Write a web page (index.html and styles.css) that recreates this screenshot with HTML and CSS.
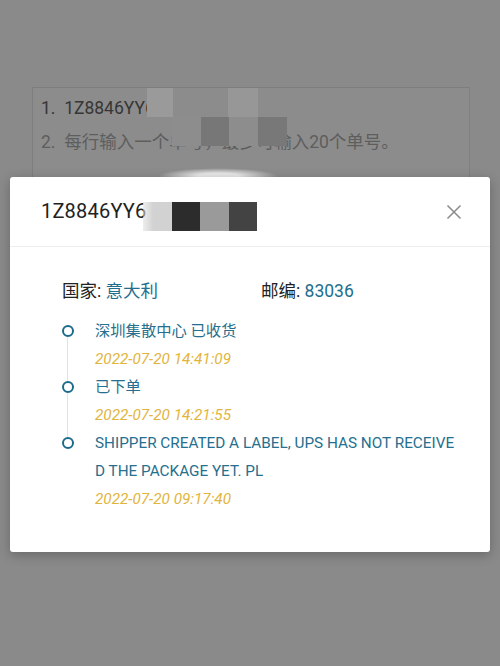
FILE: index.html
```html
<!DOCTYPE html>
<html lang="zh">
<head>
<meta charset="utf-8">
<link rel="stylesheet" href="styles.css">
</head>
<body>
<div class="page">
  <div class="input-box">
    <div class="line line-1">1.&nbsp; 1Z8846YY6</div>
    <div class="line line-2">2.&nbsp; 每行输入一个单号，最多可输入20个单号。</div>
    <span class="bm bm-a"></span>
    <span class="bm bm-b"></span>
    <span class="bm bm-c"></span>
    <span class="bm bm-d"></span>
    <span class="bm bm-e"></span>
    <span class="bm bm-f"></span>
    <span class="glow"></span>
  </div>
</div>

<div class="modal">
  <div class="modal-head">
    <div class="title">1Z8846YY6</div>
    <div class="mosaic">
      <span class="m m1"></span><span class="m m2"></span><span class="m m3"></span><span class="m m4"></span>
    </div>
    <svg class="close" width="16" height="16" viewBox="0 0 16 16"><path d="M1.5 1.5 L14.5 14.5 M14.5 1.5 L1.5 14.5" stroke="#8a8a8a" stroke-width="1.5" fill="none"/></svg>
  </div>
  <div class="modal-body">
    <div class="info">
      <div class="info-item country">国家: <span class="val">意大利</span></div>
      <div class="info-item">邮编: <span class="val">83036</span></div>
    </div>
    <ul class="timeline">
      <li class="tl-item">
        <span class="dot"></span>
        <div class="tl-title">深圳集散中心 已收货</div>
        <div class="tl-date">2022-07-20 14:41:09</div>
      </li>
      <li class="tl-item">
        <span class="dot"></span>
        <div class="tl-title">已下单</div>
        <div class="tl-date">2022-07-20 14:21:55</div>
      </li>
      <li class="tl-item last">
        <span class="dot"></span>
        <div class="tl-title">SHIPPER CREATED A LABEL, UPS HAS NOT RECEIVED THE PACKAGE YET. PL</div>
        <div class="tl-date">2022-07-20 09:17:40</div>
      </li>
    </ul>
  </div>
</div>
</body>
</html>
```

FILE: styles.css
```css
html, body {
  margin: 0;
  padding: 0;
}
body {
  width: 500px;
  height: 666px;
  background: #8a8a8a;
  font-family: Roboto, "Noto Sans CJK SC", sans-serif;
  overflow: hidden;
  position: relative;
}
.page {
  padding: 87px 30px 0 32px;
}
.input-box {
  position: relative;
  height: 200px;
  border: 1px solid #7e7e7e;
  border-bottom: none;
  padding: 3px 0 0 8px;
  background: #8c8c8c;
}
.line {
  font-size: 17.5px;
  height: 34px;
  line-height: 34px;
  white-space: nowrap;
}
.line-1 { color: #363636; }
.line-2 { color: #5e5e5e; }

.bm { position: absolute; display: block; }
.bm-a { left: 114px; top: 0; width: 26px; height: 29px; background: #9a9a9a; }
.bm-b { left: 195px; top: 0; width: 30px; height: 29px; background: #979797; }
.bm-c { left: 139px; top: 29px; width: 29px; height: 29px; background: #8d8d8d; }
.bm-d { left: 168px; top: 29px; width: 28px; height: 29px; background: #777777; }
.bm-e { left: 196px; top: 29px; width: 29px; height: 29px; background: #8d8d8d; }
.bm-f { left: 225px; top: 29px; width: 29px; height: 29px; background: #787878; }
.glow {
  position: absolute;
  left: 125px;
  top: 80px;
  width: 120px;
  height: 16px;
  border-radius: 50%;
  background: radial-gradient(ellipse at center, rgba(255,255,255,0.8) 25%, rgba(255,255,255,0) 70%);
}

.modal {
  position: absolute;
  left: 10px;
  top: 177px;
  width: 480px;
  height: 375px;
  background: #fff;
  border-radius: 3px;
  box-shadow: 0 3px 12px rgba(0,0,0,0.25);
}
.modal-head {
  position: relative;
  height: 69px;
  border-bottom: 1px solid #eeeeee;
  display: flex;
  align-items: center;
  padding-left: 31px;
}
.title {
  font-size: 20px;
  color: #222;
  letter-spacing: 0.2px;
  margin-top: -1px;
}
.mosaic {
  position: absolute;
  left: 133px;
  top: 25px;
  display: flex;
}
.m { display: block; width: 28px; height: 29px; }
.m1 { background: linear-gradient(90deg, rgba(220,220,220,0.5), #d2d2d2 35%); width: 29px; }
.m2 { background: #2c2c2c; }
.m3 { background: #9a9a9a; width: 29px; }
.m4 { background: #434343; }
.close {
  position: absolute;
  right: 28px;
  top: 27px;
}
.modal-body {
  padding: 31px 0 0 52px;
}
.info {
  display: flex;
  font-size: 17.5px;
  color: #222;
  height: 26px;
  line-height: 26px;
}
.country { width: 199px; }
.val { color: #226e8e; }

.timeline {
  list-style: none;
  margin: 13px 0 0 0;
  padding: 0;
}
.tl-item {
  position: relative;
  padding-left: 33px;
}
.tl-item::before {
  content: "";
  position: absolute;
  left: 5px;
  top: 20px;
  bottom: -8px;
  width: 1px;
  background: #e2e2e2;
}
.tl-item.last::before { display: none; }
.dot {
  position: absolute;
  left: 0;
  top: 8px;
  width: 8px;
  height: 8px;
  border: 2.5px solid #1c6b8c;
  border-radius: 50%;
  background: #fff;
}
.tl-title {
  font-size: 15.3px;
  line-height: 28px;
  color: #266f8e;
  width: 362px;
  word-break: break-all;
}
.tl-date {
  font-size: 15.3px;
  line-height: 28px;
  font-style: italic;
  color: #e1b53e;
}
```
